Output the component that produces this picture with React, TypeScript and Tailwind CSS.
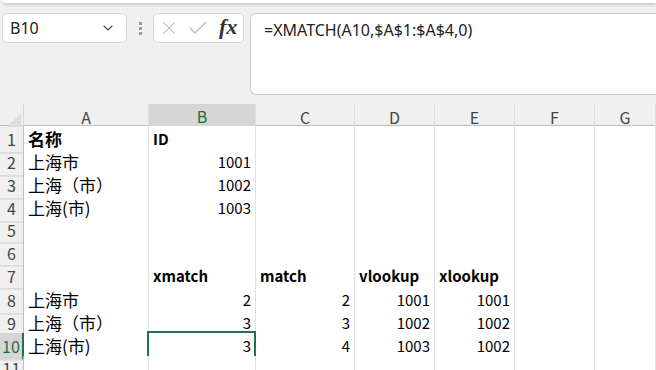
import { ChevronDown, X, Check } from 'lucide-react';

type Cell = { text?: string; bold?: boolean; right?: boolean };

const cols = ['A', 'B', 'C', 'D', 'E', 'F', 'G'];

const rows: Cell[][] = [
  [{ text: '名称', bold: true }, { text: 'ID', bold: true }],
  [{ text: '上海市' }, { text: '1001', right: true }],
  [{ text: '上海（市）' }, { text: '1002', right: true }],
  [{ text: '上海(市)' }, { text: '1003', right: true }],
  [],
  [],
  [{}, { text: 'xmatch', bold: true }, { text: 'match', bold: true }, { text: 'vlookup', bold: true }, { text: 'xlookup', bold: true }],
  [{ text: '上海市' }, { text: '2', right: true }, { text: '2', right: true }, { text: '1001', right: true }, { text: '1001', right: true }],
  [{ text: '上海（市）' }, { text: '3', right: true }, { text: '3', right: true }, { text: '1002', right: true }, { text: '1002', right: true }],
  [{ text: '上海(市)' }, { text: '3', right: true }, { text: '4', right: true }, { text: '1003', right: true }, { text: '1002', right: true }],
  [],
];

const gridCols = 'grid grid-cols-[24px_125px_107px_99px_80px_80px_80px_1fr]';
const isCjk = (s?: string) => !!s && /[\u4e00-\u9fff]/.test(s);

export default function App() {
  return (
    <div className="w-[656px] h-[370px] overflow-hidden bg-[#f0f0f0] font-['Noto_Sans_CJK_SC','Noto_Sans',sans-serif] text-black">
      <div className="h-[3px] ml-[3px] bg-white rounded-bl-[4px] shadow-[0_2px_3px_rgba(0,0,0,0.18)]" />

      <div className="flex items-start pt-[10px] pl-[2px]">
        <div className="w-[125px] h-[30px] bg-white border border-[#d6d6d6] rounded-[5px] flex items-center justify-between pl-[7px] pr-[10px]">
          <span className="text-[16px] text-[#222] font-['Noto_Sans',sans-serif]">B10</span>
          <ChevronDown size={16} strokeWidth={1.6} className="text-[#444]" />
        </div>
        <div className="w-[26px] h-[30px] flex flex-col items-center justify-center gap-[2px]">
          <span className="w-[3px] h-[3px] bg-[#9a9a9a]" />
          <span className="w-[3px] h-[3px] bg-[#9a9a9a]" />
          <span className="w-[3px] h-[3px] bg-[#9a9a9a]" />
        </div>
        <div className="w-[91px] h-[30px] bg-white border border-[#d6d6d6] rounded-[5px] flex items-center pl-[4px] gap-[6px]">
          <X size={22} strokeWidth={1.1} className="text-[#b4b4b4]" />
          <Check size={24} strokeWidth={1.1} className="text-[#b4b4b4]" />
          <span className="font-['Liberation_Serif',serif] italic font-bold text-[22px] leading-none text-[#333] ml-[3px] -mt-[2px]">fx</span>
        </div>
        <div className="ml-[6px] flex-1 h-[82px] bg-white border border-[#d0d0d0] rounded-l-[6px] border-r-0 pl-[13px] pt-[3px]">
          <span className="text-[16px] text-[#222] font-['Noto_Sans',sans-serif]">=XMATCH(A10,$A$1:$A$4,0)</span>
        </div>
      </div>

      <div className="mt-[9px]">
        <div className={`${gridCols} h-[22px] border-b border-[#bdbdbd]`}>
          <div className="border-r border-[#d4d4d4] flex items-end justify-end p-[2px]">
            <svg width="14" height="14" viewBox="0 0 14 14">
              <polygon points="14,0 14,14 0,14" fill="#dcdcdc" />
            </svg>
          </div>
          {cols.map((c) => (
            <div
              key={c}
              className={`flex items-center justify-center text-[16px] border-r border-[#dcdcdc] ${
                c === 'B' ? 'bg-[#d6d6d6] text-[#1e6e42] border-b-2 border-b-[#217346] -mb-px' : 'text-[#444]'
              }`}
            >
              {c}
            </div>
          ))}
          <div />
        </div>

        {rows.map((r, i) => {
          const rowNo = i + 1;
          const active = rowNo === 10;
          return (
            <div key={rowNo} className={`${gridCols} h-[23px]`}>
              <div
                className={`flex items-center justify-center text-[16px] border-b border-[#dcdcdc] ${
                  active ? 'bg-[#d6d6d6] text-[#1e6e42] border-r-2 border-r-[#217346]' : 'text-[#444] border-r border-r-[#bdbdbd]'
                }`}
              >
                {rowNo}
              </div>
              {cols.map((c, ci) => {
                const cell = r[ci] || {};
                const sel = rowNo === 10 && c === 'B';
                return (
                  <div
                    key={c}
                    className={`relative bg-white border-r border-b border-[#e1e1e1] flex items-center whitespace-nowrap px-[4px] ${
                      isCjk(cell.text) ? 'text-[17px]' : 'text-[15px]'
                    } ${cell.right ? 'justify-end' : ''} ${cell.bold ? 'font-bold' : ''}`}
                  >
                    {cell.text}
                    {sel && (
                      <>
                        <span className="absolute -left-[2px] -top-[2px] -right-[1px] -bottom-[1px] border-2 border-[#217346]" />
                        <span className="absolute -right-[3px] -bottom-[3px] w-[6px] h-[6px] bg-[#217346] border border-white" />
                      </>
                    )}
                  </div>
                );
              })}
              <div className="bg-white border-b border-[#e1e1e1]" />
            </div>
          );
        })}
      </div>
    </div>
  );
}
